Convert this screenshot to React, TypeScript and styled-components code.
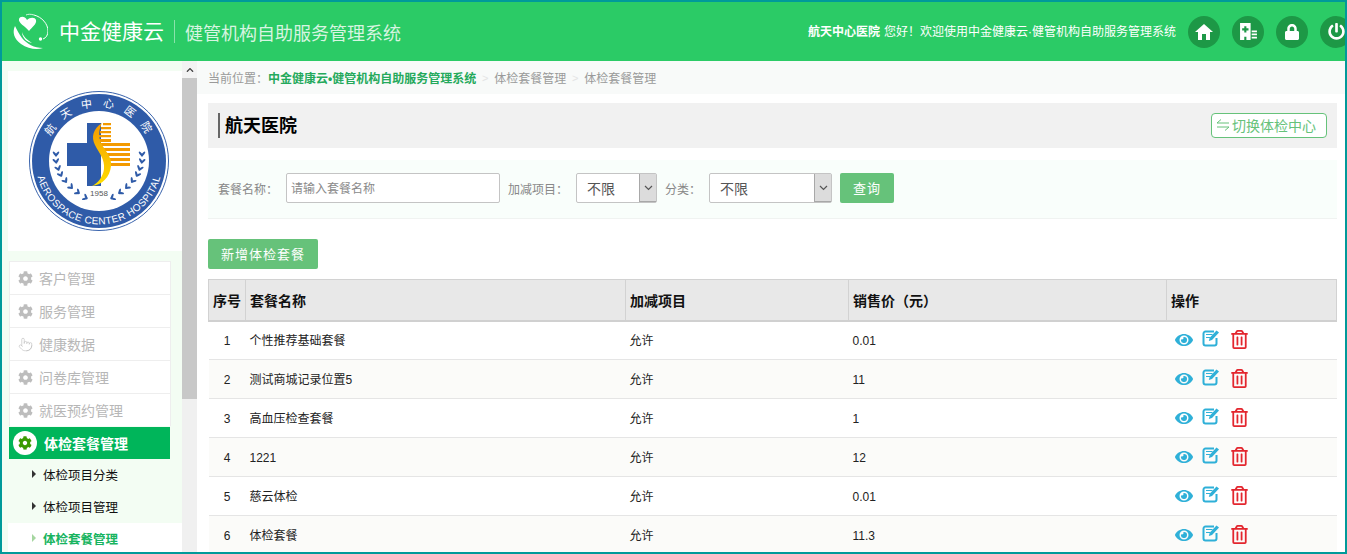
import React from 'react';
import styled, { createGlobalStyle } from 'styled-components';
import { FaCog, FaEye, FaRegTrashAlt, FaLock, FaPowerOff, FaChevronUp } from 'react-icons/fa';
import { Pointer } from 'lucide-react';

const GlobalStyle = createGlobalStyle`
  html, body { margin: 0; padding: 0; height: 100%; overflow: hidden; background: #fff; }
  #root { height: 100%; }
  * { box-sizing: border-box; }
  body { font-family: "Liberation Sans", "Noto Sans CJK SC", sans-serif; }
`;

const Frame = styled.div`
  width: 1347px;
  height: 554px;
  border: 2px solid #009a9a;
  display: flex;
  flex-direction: column;
  overflow: hidden;
  background: #fff;
`;

const Header = styled.header`
  height: 59px;
  flex: none;
  background: #2bcb66;
  display: flex;
  align-items: center;
  justify-content: space-between;
  padding-left: 10px;
  color: #fff;
  overflow: hidden;
`;

const Brand = styled.div`
  display: flex;
  align-items: center;
`;

const BrandName = styled.span`
  font-size: 21px;
  line-height: 30px;
  margin-left: 11px;
  padding-right: 10px;
  border-right: 1px solid rgba(255, 255, 255, 0.45);
  height: 23px;
  display: flex;
  align-items: center;
`;

const BrandSystem = styled.span`
  font-size: 18px;
  margin-left: 10px;
  color: rgba(255, 255, 255, 0.82);
`;

const HeaderRight = styled.div`
  display: flex;
  align-items: center;
  margin-right: -7px;
`;

const Greeting = styled.div`
  font-size: 12px;
  margin-right: 12px;
  padding-bottom: 3px;
  white-space: nowrap;
  b { font-weight: 700; margin-right: 4px; }
`;

const RoundButton = styled.div`
  width: 32px;
  height: 32px;
  border-radius: 50%;
  background: #1d9846;
  color: #fff;
  display: flex;
  align-items: center;
  justify-content: center;
  margin-right: 12px;
  flex: none;
  font-size: 16px;
  &:last-child { margin-right: 0; }
`;

const Body = styled.div`
  flex: 1;
  display: flex;
  min-height: 0;
`;

const Sidebar = styled.aside`
  width: 180px;
  flex: none;
  background: #f3fdf3;
  padding: 10px 0 0 6px;
  overflow: hidden;
`;

const LogoBox = styled.div`
  height: 180px;
  background: #fff;
  padding: 19px 0 0 20px;
  margin-bottom: 10px;
`;

const MenuItem = styled.div`
  width: 162px;
  height: 33px;
  margin-left: 1px;
  background: #fff;
  border: 1px solid #eeeeee;
  border-bottom-width: 0;
  display: flex;
  align-items: center;
  padding-left: 8px;
  font-size: 14px;
  color: #b7b7b7;
  svg { width: 15px; height: 15px; margin-right: 6px; color: #bdbdbd; flex: none; }
`;

const ActiveItem = styled.div`
  width: 161px;
  height: 32px;
  margin: 1px 0 0 1px;
  background: #00b55a;
  display: flex;
  align-items: center;
  padding-left: 4px;
  font-size: 14px;
  font-weight: 700;
  color: #fff;
`;

const ActiveIcon = styled.span`
  width: 24px;
  height: 24px;
  border-radius: 50%;
  background: #fff;
  color: #3a9a00;
  display: flex;
  align-items: center;
  justify-content: center;
  margin-right: 7px;
  font-size: 14px;
`;

const SubItem = styled.div<{ $current?: boolean }>`
  height: 32px;
  display: flex;
  align-items: center;
  padding: 0 0 2px 24px;
  font-size: 12.5px;
  color: ${p => (p.$current ? '#17b45f' : '#111')};
  font-weight: ${p => (p.$current ? 700 : 400)};
  background: ${p => (p.$current ? '#fff' : 'transparent')};
  &::before {
    content: '';
    border-left: 4px solid ${p => (p.$current ? '#a5d6a0' : '#333')};
    border-top: 4px solid transparent;
    border-bottom: 4px solid transparent;
    margin-right: 7px;
  }
`;

const ScrollTrack = styled.div`
  width: 15px;
  flex: none;
  background: #f0f0f0;
  display: flex;
  flex-direction: column;
`;

const ScrollUp = styled.div`
  height: 17px;
  background: #f3f3f3;
  color: #444;
  font-size: 8px;
  display: flex;
  align-items: center;
  justify-content: center;
`;

const ScrollThumb = styled.div`
  height: 321px;
  background: #c8c8c8;
`;

const Main = styled.main`
  flex: 1;
  min-width: 0;
  overflow: hidden;
`;

const Breadcrumb = styled.div`
  height: 33px;
  background: #f8faf9;
  display: flex;
  align-items: center;
  padding-left: 11px;
  font-size: 12px;
  color: #9a9a9a;
  white-space: nowrap;
`;

const CrumbStrong = styled.b`
  color: #24a95c;
  font-weight: 700;
`;

const CrumbSep = styled.span`
  color: #e4e4e4;
  width: 18px;
  text-align: center;
  font-size: 11px;
`;

const Content = styled.div`
  padding: 9px 8px 0 11px;
`;

const TitleBar = styled.div`
  height: 45px;
  background: #f1f1f1;
  display: flex;
  align-items: center;
  justify-content: space-between;
  padding: 0 10px;
`;

const Title = styled.h2`
  margin: 0;
  font-size: 18px;
  font-weight: 700;
  color: #000;
  border-left: 2px solid #666;
  padding-left: 5px;
  height: 25px;
  line-height: 27px;
`;

const SwitchButton = styled.div`
  width: 116px;
  height: 25px;
  border: 1px solid #66c27a;
  border-radius: 4px;
  background: #fff;
  color: #66c27a;
  font-size: 14px;
  display: flex;
  align-items: center;
  justify-content: center;
  gap: 1px;
  padding: 0 7px 2px 0;
`;

const FilterRow = styled.div`
  margin-top: 12px;
  height: 59px;
  background: #f9fefb;
  border-bottom: 1px solid #f0f3f1;
  display: flex;
  align-items: center;
  padding: 0 0 2px 10px;
  font-size: 12px;
  color: #888;
`;

const Label = styled.span`
  margin-right: 8px;
  white-space: nowrap;
`;

const TextInput = styled.input`
  width: 214px;
  height: 30px;
  border: 1px solid #c4c4c4;
  border-radius: 2px;
  background: #fff;
  padding: 2px 4px 0;
  margin-right: 8px;
  font: 12px "Liberation Sans", "Noto Sans CJK SC", sans-serif;
  color: #555;
  &::placeholder { color: #8a8a8a; opacity: 1; }
`;

const SelectBox = styled.div<{ $width: number }>`
  width: ${p => p.$width}px;
  height: 30px;
  border: 1px solid #c4c4c4;
  border-radius: 2px;
  background: #fff;
  display: flex;
  align-items: center;
  justify-content: space-between;
  font-size: 14px;
  line-height: 30px;
  color: #555;
  padding-left: 10px;
  margin-right: 8px;
`;

const SelectValue = styled.span`
  position: relative;
  top: 1px;
`;

const SelectArrow = styled.span`
  width: 17px;
  height: 28px;
  background: #dcdcdc;
  border-left: 1px solid #a8a8a8;
  border-bottom: 1px solid #a8a8a8;
  display: flex;
  align-items: center;
  justify-content: center;
`;

const GreenButton = styled.div`
  height: 30px;
  background: #66c27a;
  border-radius: 2px;
  color: #fff;
  font-size: 13px;
  letter-spacing: 1px;
  padding-bottom: 2px;
  display: flex;
  align-items: center;
  justify-content: center;
`;

const SearchButton = styled(GreenButton)`
  width: 54px;
`;

const AddButton = styled(GreenButton)`
  width: 110px;
  margin: 20px 0 10px;
`;

const Table = styled.table`
  width: 1128px;
  table-layout: fixed;
  border-collapse: collapse;
  font-size: 12px;
  color: #222;
`;

const Th = styled.th`
  height: 41px;
  background: #e8e8e8;
  border: 1px solid #d2d2d2;
  border-bottom: 2px solid #d0d0d0;
  text-align: left;
  padding: 0 4px;
  font-size: 14px;
  font-weight: 700;
  color: #111;
`;

const Tr = styled.tr<{ $odd: boolean }>`
  height: 39px;
  background: ${p => (p.$odd ? '#fff' : '#fbfbf9')};
  border-bottom: 1px solid #e5e5e5;
`;

const Td = styled.td<{ $center?: boolean }>`
  padding: 2px 4px 0;
  line-height: 16px;
  text-align: ${p => (p.$center ? 'center' : 'left')};
`;

const Actions = styled.div`
  display: flex;
  align-items: center;
  padding: 0 0 4px 4px;
`;

const ViewIcon = styled(FaEye)`
  width: 18px;
  height: 18px;
  color: #2fb0d8;
  margin-right: 9px;
  position: relative;
  top: 1px;
`;

const EditIcon = styled.svg`
  width: 18px;
  height: 18px;
  color: #2fb0d8;
  margin-right: 11px;
  position: relative;
  top: -1px;
`;

const DeleteIcon = styled(FaRegTrashAlt)`
  width: 17px;
  height: 19px;
  color: #e3262e;
`;

const rows = [
  ['1', '个性推荐基础套餐', '允许', '0.01'],
  ['2', '测试商城记录位置5', '允许', '11'],
  ['3', '高血压检查套餐', '允许', '1'],
  ['4', '1221', '允许', '12'],
  ['5', '慈云体检', '允许', '0.01'],
  ['6', '体检套餐', '允许', '11.3'],
];

const menu = ['客户管理', '服务管理', '健康数据', '问卷库管理', '就医预约管理'];

function BrandMark() {
  return (
    <svg width="36" height="40" viewBox="4 5 36 40">
      <path d="M26 8C34 10 40 17 40 24C40 28 38 31 35 32" fill="none" stroke="#fff" strokeWidth="1" />
      <path d="M26 8C23 7 20 7 18 8" fill="none" stroke="#fff" strokeWidth="0.8" />
      <circle cx="32.5" cy="32" r="1.7" fill="#fff" />
      <path d="M19 13C17 9 12 9 11 12C10 16 17 19 21 24C24 20 29 17 28 13C27 10 22 10 19 13z" fill="#fff" />
      <path d="M7 19C4 25 6 32 13 37C20 42 29 43 35 41C26 41 19 37 14 31C11 27 9 23 7 19z" fill="#fff" />
      <path d="M14 25C15 29 19 33 24 36C19 35 14 31 14 25z" fill="#fff" />
    </svg>
  );
}

function HomeIcon() {
  return (
    <svg width="18" height="18" viewBox="0 0 18 18" fill="#fff">
      <path d="M0 9L9 1L18 9H15V17H11V11H7V17H3V9z" />
    </svg>
  );
}

function HospitalIcon() {
  return (
    <svg width="19" height="19" viewBox="0 0 18 18" fill="#fff">
      <path d="M1 1h10v16H7v-3H5v3H1zM5 4v2H3v2h2v2h2V8h2V6H7V4z" fillRule="evenodd" />
      <path d="M12 8h5v1.6h-5zM12 11h5v1.6h-5zM12 14h5v1.6h-5z" />
    </svg>
  );
}

function EditGlyph() {
  return (
    <EditIcon viewBox="0 0 18 18">
      <path d="M14.5 9v5.5a2 2 0 0 1-2 2h-9a2 2 0 0 1-2-2v-10a2 2 0 0 1 2-2H12" fill="none" stroke="currentColor" strokeWidth="2" />
      <path d="M4 5.5h6.5M4 8.5h4" stroke="currentColor" strokeWidth="1.2" />
      <path d="M14.5 1.5l2.5 2-7 7.5-3.2 1 .9-3.2z" fill="currentColor" />
    </EditIcon>
  );
}

const leaves = [
  [27, 66], [27.5, 73], [30, 80], [33, 86], [38, 92], [44, 98], [51, 103], [59, 108],
];

function Wreath({ flip }: { flip?: boolean }) {
  return (
    <g transform={flip ? 'translate(140 0) scale(-1 1)' : undefined} fill="#2f5ba8">
      {leaves.map(([x, y], i) => (
        <g key={i} transform={`translate(${x} ${y}) rotate(${-i * 9})`}>
          <ellipse cx="-3" cy="-1" rx="3" ry="1.1" transform="rotate(50)" />
          <ellipse cx="3" cy="-1" rx="3" ry="1.1" transform="rotate(-50)" />
        </g>
      ))}
    </g>
  );
}

function HospitalLogo() {
  return (
    <svg width="142" height="142" viewBox="-1 -1 142 142" style={{ display: 'block' }}>
      <defs>
        <path id="arcTop" d="M 16 70 A 54 54 0 0 1 124 70" />
        <path id="arcBottom" d="M 7 62 A 63.5 63.5 0 1 0 133 62" />
        <linearGradient id="swoosh" x1="0" y1="0" x2="0" y2="1">
          <stop offset="0" stopColor="#f39a00" />
          <stop offset="1" stopColor="#ffdf00" />
        </linearGradient>
      </defs>
      <circle cx="70" cy="70" r="69.5" fill="#fff" stroke="#3a64ad" strokeWidth="1" />
      <circle cx="70" cy="70" r="67" fill="#2f5ba8" />
      <circle cx="70" cy="70" r="50" fill="#fff" />
      <text fontSize="11" fill="#fff" letterSpacing="10" textAnchor="middle" fontFamily='"Noto Sans CJK SC", sans-serif'>
        <textPath href="#arcTop" startOffset="52%">航天中心医院</textPath>
      </text>
      <text fontSize="10" fill="#fff" fontFamily='"Liberation Sans", sans-serif' textAnchor="middle" letterSpacing="0.4">
        <textPath href="#arcBottom" startOffset="50%">AEROSPACE CENTER HOSPITAL</textPath>
      </text>
      <path d="M58 32h14v20v23v20H58V75H38V52h20z" fill="#2f5ba8" />
      <g fill="#f39a00">
        <path d="M74 32h8v2.2h-8zM72 36h10v2.2H72zM71 40h11v2.2H71zM70 44h12v2.2H70zM70 48h12v3H70z" />
        <path d="M72 52h29v3H72zM74 57h27v3H74zM76 62h25v3H76zM77 67h24v3H77zM78 72h23v3H78z" />
      </g>
      <path d="M73 32C64 38 62 46 66 54c4 8 10 14 9 24-1 8-6 14-12 17 10-1 18-9 19-20 1-10-6-15-10-23-3-7-2-14 1-20z" fill="url(#swoosh)" />
      <Wreath />
      <Wreath flip />
      <text x="70" y="105" textAnchor="middle" fontSize="8" fill="#555" fontFamily='"Liberation Sans", sans-serif'>1958</text>
    </svg>
  );
}

export default function App() {
  return (
    <>
      <GlobalStyle />
      <Frame>
        <Header>
          <Brand>
            <BrandMark />
            <BrandName>中金健康云</BrandName>
            <BrandSystem>健管机构自助服务管理系统</BrandSystem>
          </Brand>
          <HeaderRight>
            <Greeting><b>航天中心医院</b>您好！欢迎使用中金健康云·健管机构自助服务管理系统</Greeting>
            <RoundButton><HomeIcon /></RoundButton>
            <RoundButton><HospitalIcon /></RoundButton>
            <RoundButton><FaLock size={16} /></RoundButton>
            <RoundButton><FaPowerOff size={17} /></RoundButton>
          </HeaderRight>
        </Header>
        <Body>
          <Sidebar>
            <LogoBox><HospitalLogo /></LogoBox>
            {menu.map(label => (
              <MenuItem key={label}>
                {label === '健康数据' ? <Pointer strokeWidth={1} /> : <FaCog />}
                {label}
              </MenuItem>
            ))}
            <ActiveItem>
              <ActiveIcon><FaCog /></ActiveIcon>
              体检套餐管理
            </ActiveItem>
            <SubItem>体检项目分类</SubItem>
            <SubItem>体检项目管理</SubItem>
            <SubItem $current>体检套餐管理</SubItem>
          </Sidebar>
          <ScrollTrack>
            <ScrollUp><FaChevronUp /></ScrollUp>
            <ScrollThumb />
          </ScrollTrack>
          <Main>
            <Breadcrumb>
              当前位置：<CrumbStrong>中金健康云•健管机构自助服务管理系统</CrumbStrong>
              <CrumbSep>&gt;</CrumbSep>体检套餐管理
              <CrumbSep>&gt;</CrumbSep>体检套餐管理
            </Breadcrumb>
            <Content>
              <TitleBar>
                <Title>航天医院</Title>
                <SwitchButton>
                  <svg width="16" height="14" viewBox="0 0 16 14" fill="none" stroke="currentColor" strokeWidth="1">
                    <path d="M14 5H2l4-3.5M2 9h12l-4 3.5" />
                  </svg>
                  切换体检中心
                </SwitchButton>
              </TitleBar>
              <FilterRow>
                <Label>套餐名称：</Label>
                <TextInput placeholder="请输入套餐名称" />
                <Label>加减项目：</Label>
                <SelectBox $width={81}>
                  <SelectValue>不限</SelectValue>
                  <SelectArrow>
                    <svg width="9" height="6" viewBox="0 0 9 6" fill="none" stroke="#555" strokeWidth="1.2"><path d="M1 1l3.5 3.5L8 1" /></svg>
                  </SelectArrow>
                </SelectBox>
                <Label>分类：</Label>
                <SelectBox $width={123}>
                  <SelectValue>不限</SelectValue>
                  <SelectArrow>
                    <svg width="9" height="6" viewBox="0 0 9 6" fill="none" stroke="#555" strokeWidth="1.2"><path d="M1 1l3.5 3.5L8 1" /></svg>
                  </SelectArrow>
                </SelectBox>
                <SearchButton>查询</SearchButton>
              </FilterRow>
              <AddButton>新增体检套餐</AddButton>
              <Table>
                <colgroup>
                  <col style={{ width: 37 }} />
                  <col style={{ width: 380 }} />
                  <col style={{ width: 223 }} />
                  <col style={{ width: 318 }} />
                  <col style={{ width: 170 }} />
                </colgroup>
                <thead>
                  <tr>
                    <Th>序号</Th>
                    <Th>套餐名称</Th>
                    <Th>加减项目</Th>
                    <Th>销售价（元）</Th>
                    <Th>操作</Th>
                  </tr>
                </thead>
                <tbody>
                  {rows.map((row, i) => (
                    <Tr key={row[0]} $odd={i % 2 === 0}>
                      <Td $center>{row[0]}</Td>
                      <Td>{row[1]}</Td>
                      <Td>{row[2]}</Td>
                      <Td>{row[3]}</Td>
                      <Td>
                        <Actions>
                          <ViewIcon />
                          <EditGlyph />
                          <DeleteIcon />
                        </Actions>
                      </Td>
                    </Tr>
                  ))}
                </tbody>
              </Table>
            </Content>
          </Main>
        </Body>
      </Frame>
    </>
  );
}
